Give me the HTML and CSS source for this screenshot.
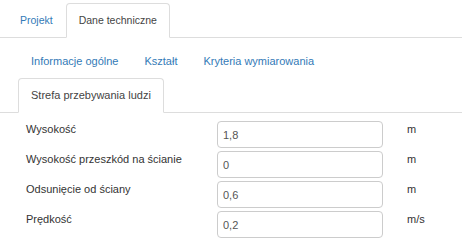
FILE: index.html
```html
<!DOCTYPE html>
<html lang="pl">
<head>
<meta charset="utf-8">
<title>Dane techniczne</title>
<link rel="stylesheet" href="styles.css">
</head>
<body>
<div class="page">
  <ul class="tabs tabs-top">
    <li class="tab"><a href="#">Projekt</a></li>
    <li class="tab active"><a href="#">Dane techniczne</a></li>
  </ul>
  <div class="content">
    <ul class="tabs tabs-sub">
      <li class="tab"><a href="#">Informacje ogólne</a></li>
      <li class="tab"><a href="#">Kształt</a></li>
      <li class="tab"><a href="#">Kryteria wymiarowania</a></li>
      <li class="tab active"><a href="#">Strefa przebywania ludzi</a></li>
    </ul>
    <div class="form">
      <div class="row">
        <label class="label">Wysokość</label>
        <input class="field" type="text" value="1,8">
        <span class="unit">m</span>
      </div>
      <div class="row">
        <label class="label">Wysokość przeszkód na ścianie</label>
        <input class="field" type="text" value="0">
        <span class="unit">m</span>
      </div>
      <div class="row">
        <label class="label">Odsunięcie od ściany</label>
        <input class="field" type="text" value="0,6">
        <span class="unit">m</span>
      </div>
      <div class="row">
        <label class="label">Prędkość</label>
        <input class="field" type="text" value="0,2">
        <span class="unit">m/s</span>
      </div>
    </div>
  </div>
</div>
</body>
</html>
```
FILE: styles.css
```css
html, body {
  margin: 0;
  padding: 0;
  background: #fff;
}
body {
  font-family: "Liberation Sans", Arial, sans-serif;
  font-size: 11px;
  color: #333;
}
.page {
  width: 462px;
}
.tabs {
  list-style: none;
  margin: 0;
  display: flex;
  flex-wrap: wrap;
  border-bottom: 1px solid #ddd;
}
.tabs-top {
  padding: 3px 0 0 7px;
}
.tabs-top .tab a {
  font-size: 10.5px;
}
.tabs-sub {
  padding: 0 0 0 18px;
}
.tab {
  margin-bottom: -1px;
}
.tab a {
  display: block;
  box-sizing: border-box;
  height: 35px;
  line-height: 33px;
  padding: 0 12px;
  border: 1px solid transparent;
  border-radius: 4px 4px 0 0;
  color: #337ab7;
  text-decoration: none;
  white-space: nowrap;
}
.tab.active a {
  color: #444;
  background: #fff;
  border-color: #ddd #ddd transparent #ddd;
}
.content {
  padding-top: 6px;
}
.form {
  padding: 8px 0 0 26px;
  display: flex;
  flex-direction: column;
  gap: 3px;
}
.row {
  display: grid;
  grid-template-columns: 191px 166px auto;
  align-items: start;
}
.label {
  line-height: 17px;
  color: #333;
}
.field {
  box-sizing: border-box;
  height: 27px;
  width: 166px;
  margin: 0;
  padding: 0 5px;
  border: 1px solid #ccc;
  border-radius: 4px;
  font-family: "Liberation Sans", Arial, sans-serif;
  font-size: 11px;
  color: #555;
  background: #fff;
}
.unit {
  margin-left: 24px;
  line-height: 17px;
  color: #333;
}
```
